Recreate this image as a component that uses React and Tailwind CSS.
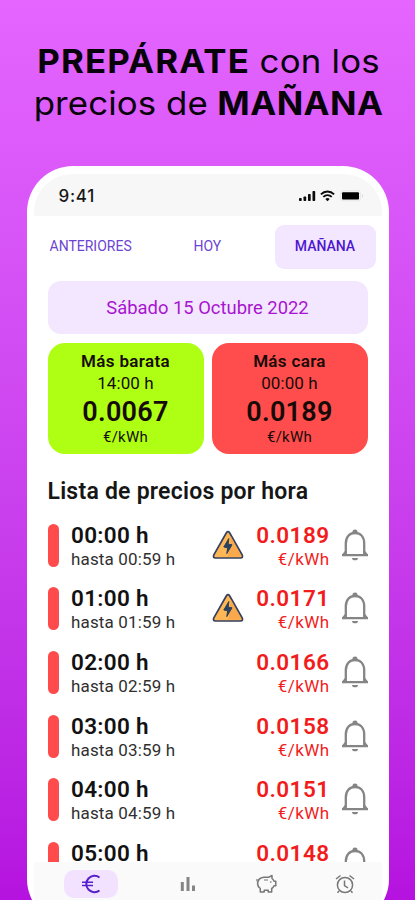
const hours = [
  { from: "00:00", to: "00:59", price: "0.0189", warning: true },
  { from: "01:00", to: "01:59", price: "0.0171", warning: true },
  { from: "02:00", to: "02:59", price: "0.0166" },
  { from: "03:00", to: "03:59", price: "0.0158" },
  { from: "04:00", to: "04:59", price: "0.0151" },
  { from: "05:00", to: "05:59", price: "0.0148" },
];

function BellIcon() {
  return (
    <svg width="28" height="34" viewBox="0 0 28 34" fill="none" stroke="#858585" strokeWidth="2.3">
      <path d="M1 27.200h26M4.800 26.500V15.500C4.800 9 8.500 5 14 5S23.200 9 23.200 15.500V26.500" />
      <path d="M2 26.800l2.800-3.500M26 26.800l-2.800-3.500" strokeWidth="1.800" />
      <path d="M11.300 4.800a2.700 3.400 0 0 1 5.400 0z" fill="#858585" stroke="none" />
      <path d="M11 30h6a3 2.300 0 0 1-6 0z" fill="#858585" stroke="none" />
    </svg>
  );
}

function WarningIcon() {
  return (
    <svg width="32" height="30" viewBox="0 0 32 30">
      <path d="M14.400 2.800Q16 .6 17.600 2.800L30.300 25.200Q31.200 27.800 28.600 28H3.400Q.8 27.800 1.700 25.200z" fill="#ffb655" stroke="#354060" strokeWidth="1.700" />
      <path d="M19 6.500l9.800 18.700q.4 1.300-.8 1.400H16z" fill="#f5a044" opacity=".6" />
      <path d="M16.800 8.500l-5 8.500 3.800.8-.8 5.800 5.200-8.800-3.800-.6z" fill="#28415f" stroke="#28415f" strokeWidth="1" />
    </svg>
  );
}

function StatusIcons() {
  return (
    <div className="flex items-center">
      <svg width="17" height="12" viewBox="0 0 17 12" fill="#0c0c0c">
        <rect x="0" y="8" width="2.700" height="3" rx=".7" />
        <rect x="4.500" y="6.500" width="2.700" height="4.500" rx=".7" />
        <rect x="9" y="4" width="2.700" height="7" rx=".7" />
        <rect x="13.500" y="1" width="2.700" height="10" rx=".7" />
      </svg>
      <svg className="ml-1" width="15" height="12" viewBox="0 0 15 12" fill="none" stroke="#0c0c0c" strokeWidth="1.900">
        <path d="M.9 4.400c3.700-3.800 9.500-3.800 13.200 0M3.300 6.900c2.400-2.400 6-2.400 8.400 0" />
        <path d="M7.500 11.200L5.300 9c1.300-1.200 3.100-1.200 4.400 0z" fill="#0c0c0c" stroke="none" />
      </svg>
      <svg className="ml-[5px]" width="24" height="12" viewBox="0 0 24 12">
        <rect x=".5" y=".8" width="20" height="10" rx="2.500" fill="none" stroke="#e4e4e4" strokeWidth=".8" />
        <rect x="2" y="2.300" width="17" height="7.200" rx="1" fill="#000" />
        <path d="M22 4q1.600 1.800 0 3.600z" fill="#c4c4c4" />
      </svg>
    </div>
  );
}

function PriceCard({ title, hour, price, color }) {
  return (
    <div className={`flex h-[111px] w-[156px] flex-col items-center rounded-[17px] pt-2 text-[#170b08] ${color}`}>
      <span className="h-[21px] text-[17px] leading-[21px] font-semibold tracking-[0.35px]">{title}</span>
      <span className="h-[23px] text-[17px] leading-[23px] tracking-[0.1px]">{hour} h</span>
      <span className="h-8 pt-px text-[27px] leading-8 font-semibold tracking-[0.3px]">{price}</span>
      <span className="text-[15px] leading-5 tracking-[0.2px]">€/kWh</span>
    </div>
  );
}

function HourRow({ hour }) {
  return (
    <div className="flex h-[63.700px] shrink-0 items-start">
      <div className="h-[43px] w-[11.500px] rounded-full bg-[#ff4b4b]" />
      <div className="ml-[12px] w-[140.500px]">
        <div className="text-[22.500px] leading-[22px] font-semibold tracking-[0.3px] text-[#121212]">{hour.from} h</div>
        <div className="mt-[3px] text-[17px] leading-5 tracking-[0.15px] text-[#303030]">hasta {hour.to} h</div>
      </div>
      <div className="mt-[6px] w-8">{hour.warning && <WarningIcon />}</div>
      <div className="w-[86px] text-right text-[#f21c1c]">
        <div className="text-[22.500px] leading-[22px] font-semibold tracking-[0.45px]">{hour.price}</div>
        <div className="mt-[3px] text-[17px] leading-5 tracking-[0.4px]">€/kWh</div>
      </div>
      <div className="mt-[4px] ml-[11px]">
        <BellIcon />
      </div>
    </div>
  );
}

function BottomNav() {
  return (
    <div className="mx-[7px] h-[63px] shrink-0 bg-[#fafafa]">
      <div className="flex h-[43px] items-center">
        <div className="ml-[30px] flex h-7 w-[54px] items-center justify-center rounded-[10px] bg-[#f2e2ff]">
          <svg width="20" height="20" viewBox="0 0 20 20" fill="none" stroke="#5420cc" strokeWidth="2">
            <path d="M18.500 3.500A8.200 8.200 0 1 0 18.500 16.500" />
            <path d="M1 8.200h11M1 11.500h11" strokeWidth="1.500" />
          </svg>
        </div>
        <svg className="mt-px ml-[62px]" width="16" height="16" viewBox="0 0 16 16" fill="#858585">
          <rect x=".8" y="6" width="3" height="9" />
          <rect x="6.500" y="1" width="3" height="14" />
          <rect x="12" y="9.500" width="3" height="5.500" />
        </svg>
        <svg className="mt-px ml-[60px]" width="21" height="20" viewBox="0 0 21 20" fill="none" stroke="#777" strokeWidth="1.500" strokeLinejoin="round">
          <path d="M3 5.500C4.300 3.600 6.500 3.200 9 3.300h3.500L16 1.500v3c1 .8 1.600 1.700 2 2.700h1.800v4.600H18c-.6 1.200-1.200 2-2.300 2.700V18h-3.500v-1.800H8.200V18H4.300v-3.500C1.200 12 1 8.500 3 5.500z" />
          <path d="M8 6h4M1 7.500V5" strokeWidth="1.200" />
          <circle cx="14.800" cy="8" r=".5" fill="#777" strokeWidth=".6" />
        </svg>
        <svg className="mt-px ml-[58px]" width="20" height="20" viewBox="0 0 20 20" fill="none" stroke="#777" strokeWidth="1.500">
          <circle cx="10" cy="11" r="7.600" />
          <path d="M9.500 6.500v5l3.500 2.500M1 5l4.500-3.500M19 5l-4.500-3.500M4 17l-1.500 1.800M16 17l1.500 1.800" />
        </svg>
      </div>
    </div>
  );
}

export default function App() {
  return (
    <div className="h-[900px] w-[415px] overflow-hidden bg-linear-to-b from-[#e465ff] to-[#b512df] font-['Roboto',sans-serif]">
      <h1 className="flex h-[166px] scale-x-[1.055] flex-col items-center pt-10 pl-[2px] font-['Inter',sans-serif] text-[33px] leading-[42px] font-normal whitespace-nowrap text-[#08020b]">
        <span className="flex gap-[9px]">
          <b className="tracking-[1.1px]">PREPÁRATE</b>
          <span className="tracking-[0.2px]">con los</span>
        </span>
        <span className="flex gap-[9px]">
          <span className="tracking-[0.1px]">precios de</span>
          <b className="tracking-[0.4px]">MAÑANA</b>
        </span>
      </h1>

      <div className="mx-auto flex h-[759px] w-[362px] flex-col overflow-hidden rounded-[46px] bg-white pt-2">
        <div className="mx-[7px] flex h-[42px] shrink-0 items-center justify-between rounded-t-[38px] bg-[#f7f7f7] pt-[2px] pr-[18px] pl-[25px]">
          <span className="font-['Inter',sans-serif] text-[17px] leading-6 font-medium tracking-[0.7px] text-[#171717]">9:41</span>
          <StatusIcons />
        </div>

        <div className="mt-[9px] flex h-[44px] shrink-0 items-center text-[14px] text-[#6d45d3]">
          <span className="ml-[23px] w-[144px] pb-[2px]">ANTERIORES</span>
          <span className="w-[81px] pb-[2px]">HOY</span>
          <span className="flex h-[44px] w-[101px] items-center justify-center rounded-[9px] bg-[#f3e6ff] pb-[2px] font-medium text-[#4e18cf]">MAÑANA</span>
        </div>

        <div className="mx-[21px] mt-3 flex h-[53px] w-[320px] shrink-0 items-center justify-center rounded-[13px] bg-[#f3e6ff] pt-px text-[18.400px] text-[#a715cf]">
          Sábado 15 Octubre 2022
        </div>

        <div className="mx-[21px] mt-[9px] flex w-[320px] shrink-0 justify-between">
          <PriceCard title="Más barata" hour="14:00" price="0.0067" color="bg-[#aeff13]" />
          <PriceCard title="Más cara" hour="00:00" price="0.0189" color="bg-[#ff4d4d]" />
        </div>

        <h2 className="mx-[21px] mt-[23px] h-[30px] shrink-0 text-[23px] leading-[30px] font-semibold tracking-[0.23px] text-[#161616]">
          Lista de precios por hora
        </h2>

        <div className="mt-[9px] flex min-h-0 flex-1 flex-col overflow-hidden pt-[7.500px] pl-[21px]">
          {hours.map((hour) => (
            <HourRow key={hour.from} hour={hour} />
          ))}
        </div>

        <BottomNav />
      </div>
    </div>
  );
}
